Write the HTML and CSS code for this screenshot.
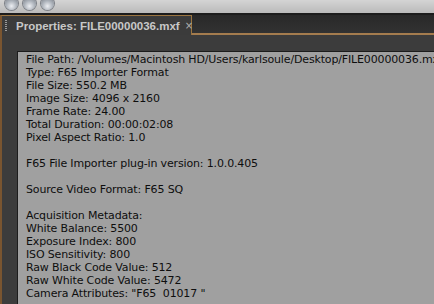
FILE: index.html
```html
<!DOCTYPE html>
<html>
<head>
<meta charset="utf-8">
<link rel="stylesheet" href="styles.css">
</head>
<body>
<div class="window">
  <div class="titlebar">
    <span class="light"></span><span class="light"></span><span class="light"></span>
  </div>
  <div class="tabbar">
    <div class="tab">
      <span class="grip"></span>
      <span class="tab-title">Properties: FILE00000036.mxf</span>
      <span class="close">×</span>
    </div>
    <div class="tab-fill"></div>
  </div>
  <div class="panel">
    <div class="content">
      <div>File Path: /Volumes/Macintosh HD/Users/karlsoule/Desktop/FILE00000036.mxf</div>
      <div>Type: F65 Importer Format</div>
      <div>File Size: 550.2 MB</div>
      <div>Image Size: 4096 x 2160</div>
      <div>Frame Rate: 24.00</div>
      <div>Total Duration: 00:00:02:08</div>
      <div>Pixel Aspect Ratio: 1.0</div>
      <div class="blank"></div>
      <div>F65 File Importer plug-in version: 1.0.0.405</div>
      <div class="blank"></div>
      <div>Source Video Format: F65 SQ</div>
      <div class="blank"></div>
      <div>Acquisition Metadata:</div>
      <div>White Balance: 5500</div>
      <div>Exposure Index: 800</div>
      <div>ISO Sensitivity: 800</div>
      <div>Raw Black Code Value: 512</div>
      <div>Raw White Code Value: 5472</div>
      <div>Camera Attributes: "F65&nbsp;&nbsp;01017 "</div>
    </div>
  </div>
</div>
</body>
</html>
```
FILE: styles.css
```css
html, body {
  margin: 0;
  padding: 0;
  width: 434px;
  height: 304px;
  overflow: hidden;
  background: #3c3c3c;
}
.window {
  display: flex;
  flex-direction: column;
  height: 304px;
}
.titlebar {
  height: 13px;
  background: linear-gradient(#d4d4d4, #bababa);
  border-bottom: 2px solid #1c1c1c;
  display: flex;
  gap: 5px;
  padding-left: 5px;
  overflow: hidden;
  flex: none;
}
.light {
  width: 13px;
  height: 13px;
  border-radius: 50%;
  margin-top: -3px;
  background: radial-gradient(circle at 50% 70%, #eceef2 0, #aeb4bc 45%, #6d737b 100%);
  box-shadow: 0 0 0 1px #7d8188;
}
.tabbar {
  display: flex;
  height: 20px;
  flex: none;
  background: #2e2e2e;
}
.tab {
  width: 192px;
  flex: none;
  background: #3b3b3b;
  border-top: 1px solid #9a7440;
  border-right: 1px solid #9a7440;
  border-left: 2px solid #7a5530;
  display: flex;
  align-items: center;
  box-sizing: border-box;
  white-space: nowrap;
  color: #c8c8c8;
}
.grip {
  width: 2px;
  height: 11px;
  margin-left: 3px;
  margin-right: 9px;
  flex: none;
  background: repeating-linear-gradient(#9a9a9a 0 1px, transparent 1px 2px);
}
.tab-title {
  font-family: "Liberation Sans", Arial, sans-serif;
  font-size: 11.5px;
  font-weight: bold;
}
.close {
  margin-left: 5px;
  font-family: "DejaVu Sans", sans-serif;
  font-size: 10px;
  color: #b0b0b0;
}
.tab-fill {
  flex: 1;
  background: linear-gradient(#282828, #323232);
  border-bottom: 2px solid #a47c4e;
  box-sizing: border-box;
}
.panel {
  flex: 1;
  background: #3c3c3c;
  border-left: 2px solid #7a5530;
  padding: 16px 0 0 15px;
  display: flex;
  min-height: 0;
}
.content {
  flex: 1;
  background: #a0a0a0;
  border-top: 1px solid #1c1c1c;
  border-left: 1px solid #1c1c1c;
  padding: 1px 0 0 8px;
  font-family: "DejaVu Sans", sans-serif;
  font-size: 11px;
  letter-spacing: -0.15px;
  line-height: 13px;
  color: #0e0e0e;
  white-space: nowrap;
  overflow: hidden;
}
.blank {
  height: 13px;
}
```
